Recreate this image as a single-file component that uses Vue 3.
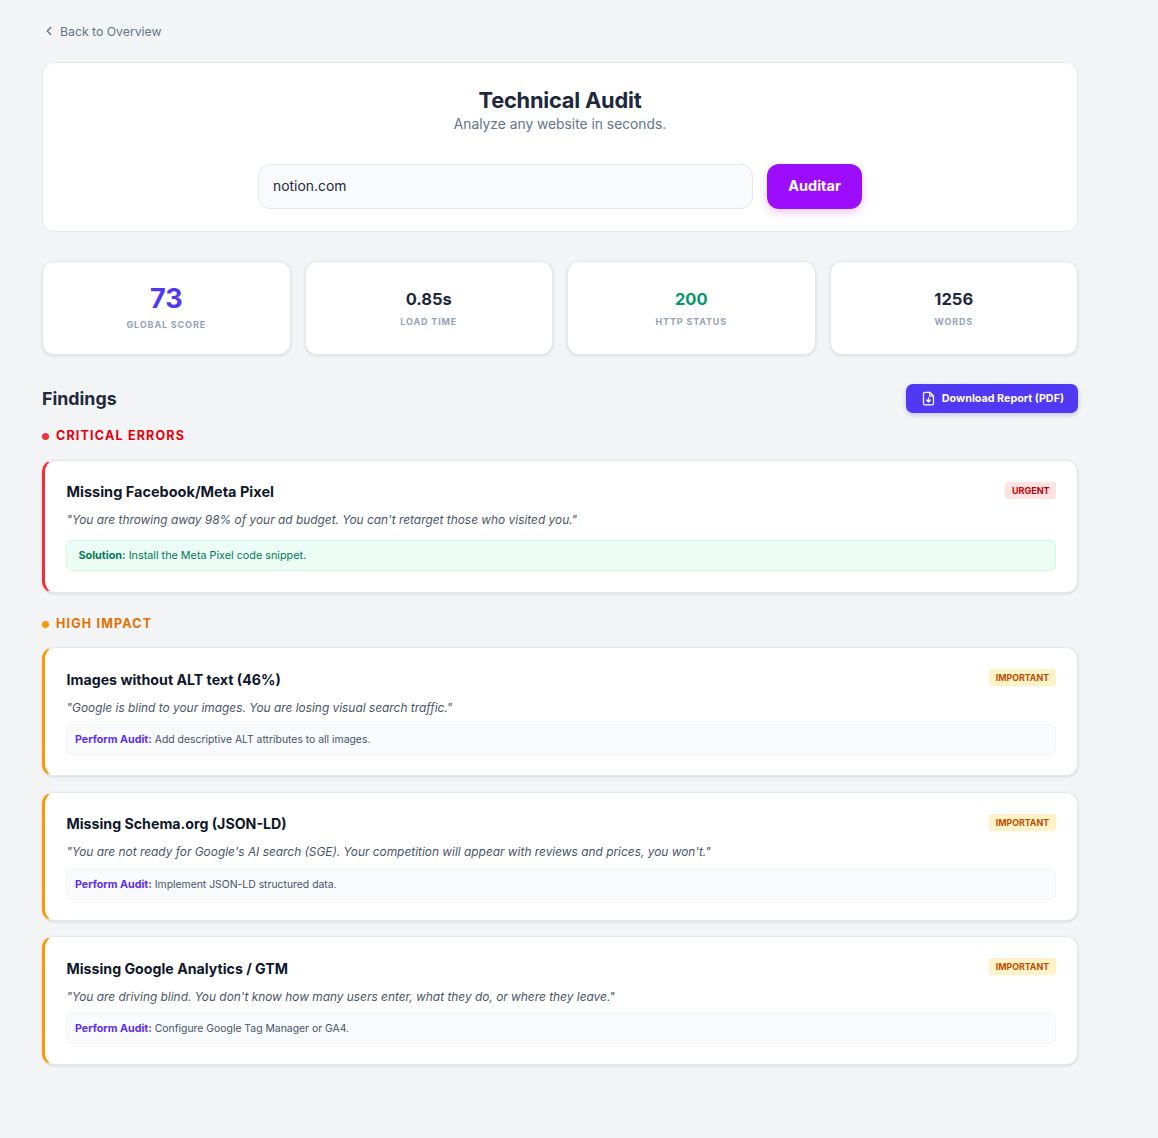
<script setup>
// Audit result page: search hero, stat tiles, findings grouped by severity
const stats = [
  { value: '73', label: 'Global Score', tone: 'score' },
  { value: '0.85s', label: 'Load Time', tone: '' },
  { value: '200', label: 'HTTP Status', tone: 'ok' },
  { value: '1256', label: 'Words', tone: '' },
]

const highImpact = [
  {
    title: 'Images without ALT text (46%)',
    quote: '"Google is blind to your images. You are losing visual search traffic."',
    fix: 'Add descriptive ALT attributes to all images.',
  },
  {
    title: 'Missing Schema.org (JSON-LD)',
    quote: '"You are not ready for Google\'s AI search (SGE). Your competition will appear with reviews and prices, you won\'t."',
    fix: 'Implement JSON-LD structured data.',
  },
  {
    title: 'Missing Google Analytics / GTM',
    quote: '"You are driving blind. You don\'t know how many users enter, what they do, or where they leave."',
    fix: 'Configure Google Tag Manager or GA4.',
  },
]
</script>

<template>
  <main class="page">
    <a class="back">
      <svg width="14" height="14" viewBox="0 0 24 24" fill="none" stroke="currentColor" stroke-width="2.2" stroke-linecap="round" stroke-linejoin="round">
        <path d="M15 18l-6-6 6-6" />
      </svg>
      Back to Overview
    </a>

    <!-- Hero -->
    <section class="hero">
      <h1>Technical Audit</h1>
      <p>Analyze any website in seconds.</p>
      <form class="search" @submit.prevent>
        <input class="search__input" value="notion.com" />
        <button class="search__btn">Auditar</button>
      </form>
    </section>

    <!-- Stats -->
    <section class="stats">
      <div v-for="s in stats" :key="s.label" class="stat">
        <div class="stat__value" :class="s.tone && `stat__value--${s.tone}`">{{ s.value }}</div>
        <div class="stat__label">{{ s.label }}</div>
      </div>
    </section>

    <!-- Findings -->
    <div class="findings-head">
      <h2>Findings</h2>
      <button class="pdf">
        <svg width="15" height="15" viewBox="0 0 24 24" fill="none" stroke="currentColor" stroke-width="2" stroke-linecap="round" stroke-linejoin="round">
          <path d="M14 2H6a2 2 0 0 0-2 2v16a2 2 0 0 0 2 2h12a2 2 0 0 0 2-2V8z" />
          <path d="M14 2v6h6" />
          <path d="M12 11v6" />
          <path d="M9 14.5l3 3 3-3" />
        </svg>
        Download Report (PDF)
      </button>
    </div>

    <h3 class="group group--critical"><i></i>Critical Errors</h3>
    <article class="card card--critical">
      <div class="card__top">
        <h4>Missing Facebook/Meta Pixel</h4>
        <span class="tag tag--urgent">Urgent</span>
      </div>
      <p class="card__quote">"You are throwing away 98% of your ad budget. You can't retarget those who visited you."</p>
      <div class="fix fix--solution"><b>Solution:</b> Install the Meta Pixel code snippet.</div>
    </article>

    <h3 class="group group--high"><i></i>High Impact</h3>
    <div class="list">
      <article v-for="f in highImpact" :key="f.title" class="card card--high">
        <div class="card__top">
          <h4>{{ f.title }}</h4>
          <span class="tag tag--important">Important</span>
        </div>
        <p class="card__quote">{{ f.quote }}</p>
        <div class="fix"><b>Perform Audit:</b> {{ f.fix }}</div>
      </article>
    </div>
  </main>
</template>

<style>
body {
  margin: 0;
  background: #f3f4f6;
}
</style>

<style scoped>
.page {
  box-sizing: border-box;
  width: 1158px;
  min-height: 1138px;
  padding: 23px 80px 72px 42px;
  font-family: Inter, "Liberation Sans", sans-serif;
  color: #1e293b;
}
.back {
  display: flex;
  align-items: center;
  gap: 4px;
  height: 16px;
  font-size: 12.25px;
  color: #64748b;
  margin-bottom: 23px;
}

/* Hero */
.hero {
  box-sizing: border-box;
  height: 170px;
  padding-top: 24px;
  background: #fff;
  border: 1px solid #e2e8f0;
  border-radius: 12px;
  text-align: center;
}
.hero h1 {
  margin: 0;
  font-size: 21.8px;
  line-height: 26px;
  font-weight: 700;
  letter-spacing: -0.2px;
}
.hero p {
  margin: 0;
  font-size: 13.8px;
  line-height: 22px;
  color: #64748b;
}
.search {
  display: flex;
  justify-content: center;
  gap: 14px;
  margin-top: 29px;
}
.search__input {
  box-sizing: border-box;
  width: 495px;
  height: 45px;
  padding: 0 14px 2px;
  background: #f8fafc;
  border: 1px solid #e2e8f0;
  border-radius: 12px;
  font: 13.9px Inter, sans-serif;
  color: #1e293b;
  outline: none;
}
.search__btn {
  width: 95px;
  height: 45px;
  padding: 0 0 2px;
  border: 0;
  border-radius: 12px;
  background: #9d0dfd;
  color: #fff;
  font: 700 14.5px Inter, sans-serif;
  box-shadow: 0 4px 10px rgba(157, 13, 253, 0.2);
}

/* Stats */
.stats {
  display: grid;
  grid-template-columns: repeat(4, 1fr);
  gap: 14px;
  margin-top: 29px;
}
.stat {
  box-sizing: border-box;
  height: 94px;
  padding-top: 20px;
  background: #fff;
  border: 1px solid #e2e8f0;
  border-radius: 12px;
  box-shadow: 0 1px 3px rgba(15, 23, 42, 0.12);
  text-align: center;
}
.stat__value {
  font-size: 16.5px;
  line-height: 34px;
  font-weight: 700;
}
.stat__value--score {
  font-size: 27px;
  color: #5038f5;
}
.stat__value--ok { color: #059669; }
.stat__label {
  font-size: 9px;
  line-height: 12px;
  font-weight: 700;
  letter-spacing: 0.85px;
  text-transform: uppercase;
  color: #94a3b8;
}
.stat__value--score + .stat__label { margin-top: 3px; }

/* Findings */
.findings-head {
  display: flex;
  align-items: center;
  justify-content: space-between;
  margin-top: 29px;
}
.findings-head h2 {
  margin: 0;
  font-size: 17.8px;
  font-weight: 700;
}
.pdf {
  display: flex;
  align-items: center;
  gap: 6px;
  height: 29px;
  padding: 0 14px 1px 15px;
  border: 0;
  border-radius: 7px;
  background: #5038f5;
  color: #fff;
  font: 700 10.75px Inter, sans-serif;
  box-shadow: 0 2px 5px rgba(80, 56, 245, 0.25);
}

.group {
  display: flex;
  align-items: center;
  gap: 7px;
  margin: 15px 0 16px;
  font-size: 12.5px;
  line-height: 16px;
  font-weight: 700;
  letter-spacing: 1.2px;
  text-transform: uppercase;
}
.group i {
  width: 7px;
  height: 7px;
  border-radius: 50%;
}
.group--critical { color: #e7000b; }
.group--critical i { background: #ef3340; }
.group--high { margin: 23px 0 15px; color: #e17100; }
.group--high i { background: #ff9800; }

.list {
  display: flex;
  flex-direction: column;
  gap: 15.5px;
}

/* Finding card */
.card {
  box-sizing: border-box;
  padding: 18px 21px 21px 21.5px;
  background: #fff;
  border: 1px solid #e2e8f0;
  border-left: 3px solid;
  border-radius: 12px;
  box-shadow: 0 1px 3px rgba(15, 23, 42, 0.12);
}
.card--critical { border-left-color: #fb2c36; }
.card--high {
  padding-bottom: 20px;
  border-left-color: #ff9800;
}
.card__top {
  display: flex;
  align-items: flex-start;
  justify-content: space-between;
}
.card__top h4 {
  margin: 4px 0 0;
  font-size: 14.5px;
  line-height: 18px;
  font-weight: 700;
  color: #0f172a;
}
.card--high .card__top h4 {
  margin-top: 4.5px;
  font-size: 14.2px;
}
.tag {
  margin-top: 2.5px;
  padding: 0 6.5px;
  border-radius: 3px;
  font-size: 9px;
  line-height: 17px;
  font-weight: 700;
  text-transform: uppercase;
}
.tag--urgent { background: #ffe2e2; color: #c10007; }
.tag--important {
  margin-top: 3px;
  padding: 0 7px;
  font-size: 8.8px;
  background: #fef3c6;
  color: #bb4d00;
}
.card__quote {
  margin: 10px 0 11px;
  font-size: 11.9px;
  line-height: 18px;
  font-style: italic;
  color: #475569;
}
.card--high .card__quote { margin: 10px 0 7.5px; }
.fix {
  box-sizing: border-box;
  height: 31px;
  margin-left: -0.5px;
  padding: 0 8px;
  background: #f8fafc;
  border: 1px solid #f1f5f9;
  border-radius: 6px;
  font-size: 10.4px;
  line-height: 29px;
  color: #475569;
}
.fix b { color: #5f2df5; font-weight: 700; font-size: 10.7px; }
.fix--solution {
  padding: 0 11.5px;
  background: #ecfdf5;
  border-color: #d0fae5;
  font-size: 10.8px;
  color: #007a55;
}
.fix--solution b { color: #007a55; font-size: 10.8px; }
</style>
